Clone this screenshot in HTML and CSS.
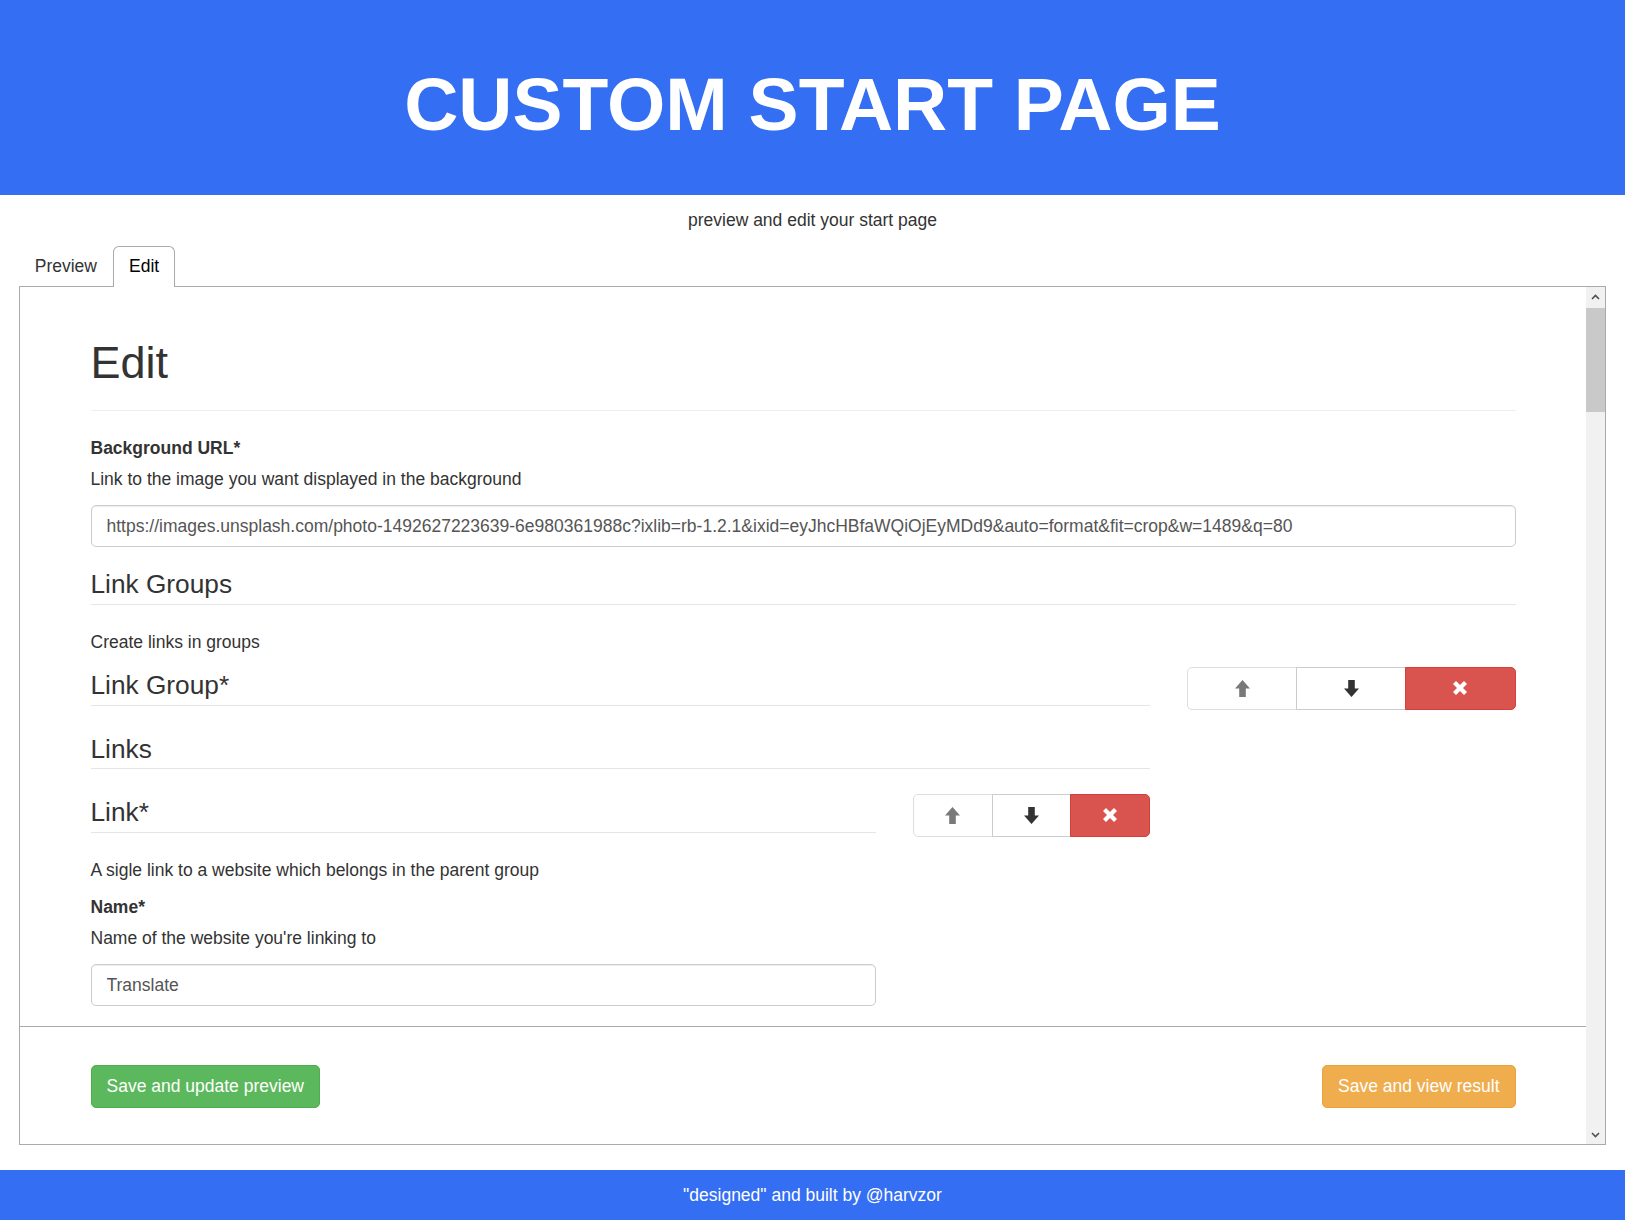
FILE: index.html
```html
<!DOCTYPE html>
<html lang="en">
<head>
<meta charset="utf-8">
<title>Custom Start Page</title>
<link rel="stylesheet" href="styles.css">
</head>
<body>
<header class="site-header">
  <h1 class="site-title">CUSTOM START PAGE</h1>
</header>

<main class="page">
  <p class="subtitle">preview and edit your start page</p>

  <ul class="tabs">
    <li class="tab">Preview</li>
    <li class="tab tab-selected">Edit</li>
  </ul>

  <section class="panel">
    <div class="panel-main">
      <div class="panel-body">
        <div class="container">
          <div class="page-header"><h1>Edit</h1></div>

          <div class="form-group">
            <label class="control-label">Background URL*</label>
            <p class="field-description">Link to the image you want displayed in the background</p>
            <input class="form-control" type="text" value="https://images.unsplash.com/photo-1492627223639-6e980361988c?ixlib=rb-1.2.1&amp;ixid=eyJhcHBfaWQiOjEyMDd9&amp;auto=format&amp;fit=crop&amp;w=1489&amp;q=80">
          </div>

          <fieldset class="fieldset">
            <legend class="legend">Link Groups</legend>
            <p class="field-description">Create links in groups</p>

            <div class="array-item">
              <fieldset class="fieldset">
                <legend class="legend">Link Group*</legend>

                <fieldset class="fieldset">
                  <legend class="legend">Links</legend>

                  <div class="array-item">
                    <fieldset class="fieldset">
                      <legend class="legend">Link*</legend>
                      <p class="field-description">A sigle link to a website which belongs in the parent group</p>

                      <div class="form-group">
                        <label class="control-label">Name*</label>
                        <p class="field-description">Name of the website you're linking to</p>
                        <input class="form-control" type="text" value="Translate">
                      </div>
                    </fieldset>

                    <div class="btn-group">
                      <button class="btn btn-default" type="button" disabled>
                        <svg class="glyph" viewBox="0 0 15 17" width="15" height="17"><path d="M7.5 0 L15 8.4 H10.8 V17 H4.2 V8.4 H0 Z" fill="#333"/></svg>
                      </button>
                      <button class="btn btn-default" type="button">
                        <svg class="glyph" viewBox="0 0 15 17" width="15" height="17"><path d="M4.2 0 H10.8 V8.6 H15 L7.5 17 L0 8.6 H4.2 Z" fill="#333"/></svg>
                      </button>
                      <button class="btn btn-danger" type="button">
                        <svg class="glyph" viewBox="0 0 14 14" width="14" height="14"><path d="M0 3 L3 0 L7 4 L11 0 L14 3 L10 7 L14 11 L11 14 L7 10 L3 14 L0 11 L4 7 Z" fill="#fff"/></svg>
                      </button>
                    </div>
                  </div>
                </fieldset>
              </fieldset>

              <div class="btn-group">
                <button class="btn btn-default" type="button" disabled>
                  <svg class="glyph" viewBox="0 0 15 17" width="15" height="17"><path d="M7.5 0 L15 8.4 H10.8 V17 H4.2 V8.4 H0 Z" fill="#333"/></svg>
                </button>
                <button class="btn btn-default" type="button">
                  <svg class="glyph" viewBox="0 0 15 17" width="15" height="17"><path d="M4.2 0 H10.8 V8.6 H15 L7.5 17 L0 8.6 H4.2 Z" fill="#333"/></svg>
                </button>
                <button class="btn btn-danger" type="button">
                  <svg class="glyph" viewBox="0 0 14 14" width="14" height="14"><path d="M0 3 L3 0 L7 4 L11 0 L14 3 L10 7 L14 11 L11 14 L7 10 L3 14 L0 11 L4 7 Z" fill="#fff"/></svg>
                </button>
              </div>
            </div>
          </fieldset>
        </div>
      </div>

      <div class="panel-bar">
        <div class="container bar-inner">
          <button class="btn btn-success" type="button">Save and update preview</button>
          <button class="btn btn-warning" type="button">Save and view result</button>
        </div>
      </div>
    </div>

    <div class="scrollbar" aria-hidden="true">
      <div class="sb-btn">
        <svg viewBox="0 0 9 6" width="9" height="6"><polyline points="1,5 4.5,1.5 8,5" fill="none" stroke="#505050" stroke-width="1.6"/></svg>
      </div>
      <div class="sb-track"><div class="sb-thumb"></div></div>
      <div class="sb-btn">
        <svg viewBox="0 0 9 6" width="9" height="6"><polyline points="1,1 4.5,4.5 8,1" fill="none" stroke="#505050" stroke-width="1.6"/></svg>
      </div>
    </div>
  </section>
</main>

<footer class="site-footer">"designed" and built by @harvzor</footer>
</body>
</html>
```

FILE: styles.css
```css
* {
  box-sizing: border-box;
}

html, body {
  margin: 0;
  padding: 0;
}

body {
  font-family: "Liberation Sans", Arial, Helvetica, sans-serif;
  font-size: 17.5px;
  line-height: 25px;
  color: #333;
  background: #fff;
}

/* Header */
.site-header {
  height: 195px;
  padding-top: 66.5px;
  background: #346ef2;
  text-align: center;
}

.site-title {
  margin: 0;
  font-size: 75px;
  line-height: 75px;
  font-weight: 700;
  color: #fff;
}

/* Page */
.page {
  padding: 0 18.75px;
}

.subtitle {
  margin: 13px 0 13px;
  text-align: center;
}

/* Tabs */
.tabs {
  display: flex;
  margin: 0;
  padding: 0;
  list-style: none;
  border-bottom: 1px solid #aaa;
}

.tab {
  padding: 7px 15px;
  border: 1px solid transparent;
  border-bottom: none;
  cursor: pointer;
}

.tab-selected {
  background: #fff;
  border-color: #aaa;
  border-radius: 6px 6px 0 0;
  color: #000;
  padding-bottom: 8px;
  margin-bottom: -1px;
}

/* Panel */
.panel {
  display: flex;
  height: 858px;
  margin-bottom: 25px;
  border: 1px solid #aaa;
  border-top: none;
}

.panel-main {
  flex: 1;
  min-width: 0;
  display: flex;
  flex-direction: column;
}

.panel-body {
  flex: 1;
  min-height: 0;
  overflow: hidden;
}

.container {
  width: 1462.5px;
  margin: 0 auto;
  padding: 0 18.75px;
}

.page-header {
  margin: 50.5px 0 25px;
  padding-bottom: 10.5px;
  border-bottom: 1px solid #eee;
}

.page-header h1 {
  margin: 0 0 12.5px;
  font-size: 45px;
  line-height: 49.5px;
  font-weight: 500;
}

/* Form */
.form-group {
  margin-bottom: 18.75px;
}

.control-label {
  display: block;
  margin-bottom: 6.25px;
  font-weight: 700;
}

.field-description {
  margin: 0 0 12.5px;
}

.form-control {
  display: block;
  width: 100%;
  height: 42.5px;
  padding: 7.5px 15px;
  font-family: inherit;
  font-size: 17.5px;
  line-height: 25px;
  color: #555;
  background: #fff;
  border: 1px solid #ccc;
  border-radius: 5px;
  box-shadow: inset 0 1px 1px rgba(0, 0, 0, .075);
}

.fieldset {
  min-width: 0;
  margin: 0;
  padding: 0;
  border: 0;
}

.legend {
  display: block;
  width: 100%;
  padding: 0;
  margin-bottom: 25px;
  font-size: 26.25px;
  line-height: 37.5px;
  color: #333;
  border: 0;
  border-bottom: 1px solid #e5e5e5;
}

/* Array items: 9 / 3 bootstrap columns */
.array-item {
  display: grid;
  grid-template-columns: 1fr calc(25% - 28.125px);
  column-gap: 37.5px;
  align-items: start;
}

/* Buttons */
.btn {
  display: inline-flex;
  align-items: center;
  justify-content: center;
  height: 42.5px;
  padding: 7.5px 15px;
  font-family: inherit;
  font-size: 17.5px;
  line-height: 25px;
  border: 1px solid transparent;
  border-radius: 5px;
  cursor: pointer;
  white-space: nowrap;
}

.btn-default {
  color: #333;
  background: #fff;
  border-color: #ccc;
}

.btn-danger {
  color: #fff;
  background: #d9534f;
  border-color: #d43f3a;
}

.btn-success {
  color: #fff;
  background: #5cb85c;
  border-color: #4cae4c;
}

.btn-warning {
  color: #fff;
  background: #f0ad4e;
  border-color: #eea236;
}

.btn[disabled] {
  opacity: .65;
  cursor: not-allowed;
}

.btn-group {
  display: flex;
}

.btn-group .btn {
  flex: 1 1 0;
  padding-left: 7.5px;
  padding-right: 7.5px;
  border-radius: 0;
}

.btn-group .btn + .btn {
  margin-left: -1px;
}

.btn-group .btn:first-child {
  border-radius: 5px 0 0 5px;
}

.btn-group .btn:last-child {
  border-radius: 0 5px 5px 0;
}

.glyph {
  display: block;
}

/* Bottom action bar */
.panel-bar {
  flex: none;
  border-top: 1px solid #aaa;
  padding: 38px 0 36.5px;
  background: #fff;
}

.bar-inner {
  display: flex;
  justify-content: space-between;
}

/* Scrollbar */
.scrollbar {
  flex: none;
  width: 19px;
  display: flex;
  flex-direction: column;
  background: #f1f1f1;
}

.sb-btn {
  height: 19px;
  display: flex;
  align-items: center;
  justify-content: center;
}

.sb-btn svg {
  display: block;
}

.sb-track {
  flex: 1;
  padding-top: 2px;
}

.sb-thumb {
  height: 104px;
  background: #c9c9c9;
}

/* Footer */
.site-footer {
  height: 50px;
  padding: 12.5px 0;
  background: #346ef2;
  color: #fff;
  text-align: center;
}
```
